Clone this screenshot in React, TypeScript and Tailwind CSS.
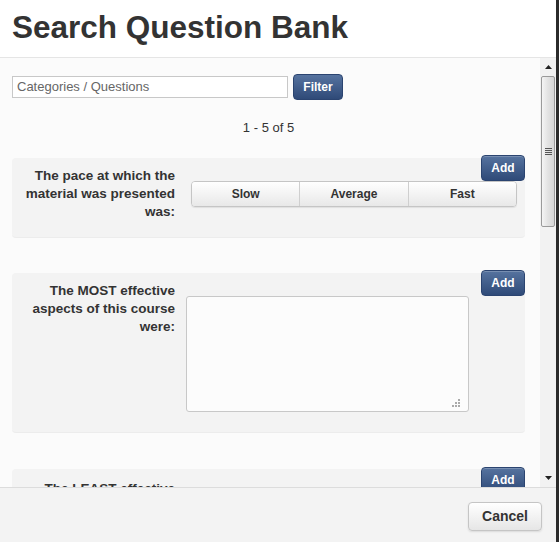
import React from 'react'

const font = { fontFamily: '"Liberation Sans", Arial, sans-serif' }

const AddButton: React.FC = () => (
  <button className="h-[26px] w-[44px] rounded-[4px] border border-[#2b4470] bg-gradient-to-b from-[#56739f] to-[#2f4a78] text-[12px] font-bold text-white shadow-[inset_0_1px_0_rgba(255,255,255,0.2)]">
    Add
  </button>
)

const Scrollbar: React.FC = () => (
  <div className="flex w-[16px] flex-col items-center bg-[#f2f2f2]">
    <div className="flex h-[18px] w-full items-center justify-center">
      <svg width="7" height="4" viewBox="0 0 7 4">
        <path d="M0 4 L3.5 0 L7 4 Z" fill="#222" />
      </svg>
    </div>
    <div className="flex h-[151px] w-[14px] items-center justify-center rounded-[2px] border border-[#9a9a9a] bg-gradient-to-r from-[#f4f4f4] via-[#e2e2e2] to-[#d6d6d6]">
      <div className="flex flex-col gap-[1px]">
        <div className="h-[1px] w-[7px] bg-[#555]" />
        <div className="h-[1px] w-[7px] bg-[#555]" />
        <div className="h-[1px] w-[7px] bg-[#555]" />
        <div className="h-[1px] w-[7px] bg-[#555]" />
      </div>
    </div>
    <div className="flex-1" />
    <div className="flex h-[18px] w-full items-center justify-center">
      <svg width="7" height="4" viewBox="0 0 7 4">
        <path d="M0 0 L3.5 4 L7 0 Z" fill="#222" />
      </svg>
    </div>
  </div>
)

export default function App() {
  const segments = ['Slow', 'Average', 'Fast']

  return (
    <div className="flex h-[542px] w-[559px] bg-[#2b2b2b] text-[#333]" style={font}>
      <div className="flex w-[556px] flex-col bg-white">
        {/* Header */}
        <div className="flex h-[58px] shrink-0 items-center border-b border-[#e5e5e5] px-[12px] pb-[2px]">
          <h1 className="text-[31.5px] font-bold leading-none text-[#333]">Search Question Bank</h1>
        </div>

        {/* Body */}
        <div className="flex min-h-0 flex-1">
          <div className="flex-1 overflow-hidden bg-[#fbfbfb] pl-[12px] pr-[15px] pt-[16px]">
            <div className="flex items-center gap-[5px]">
              <div className="flex h-[22px] w-[276px] items-center border border-[#c8c8c8] bg-white px-[4px] text-[13px] text-[#666]">
                Categories / Questions
              </div>
              <button className="h-[26px] w-[50px] rounded-[4px] border border-[#2b4470] bg-gradient-to-b from-[#56739f] to-[#2f4a78] text-[12px] font-bold text-white">
                Filter
              </button>
            </div>

            <div className="mt-[19px] text-center text-[13px] leading-[18px]">1 - 5 of 5</div>

            {/* Question 1 */}
            <div className="relative mt-[21px] flex h-[80px] rounded-[4px] border-b border-[#ececec] bg-[#f3f3f3]">
              <div className="w-[163px] shrink-0 pl-[4px] pt-[9px] text-right text-[13.5px] font-bold leading-[18px]">
                The pace at which the material was presented was:
              </div>
              <div className="ml-[16px] mt-[23px] flex h-[26px] w-[326px] shrink-0 overflow-hidden rounded-[4px] border border-[#c5c5c5] shadow-[0_1px_1px_rgba(0,0,0,0.08)]">
                {segments.map((s, i) => (
                  <div
                    key={s}
                    className={`flex flex-1 items-center justify-center bg-gradient-to-b from-white to-[#e8e8e8] text-[12px] font-bold ${
                      i > 0 ? 'border-l border-[#cfcfcf]' : ''
                    }`}
                  >
                    {s}
                  </div>
                ))}
              </div>
              <div className="absolute -top-[3px] right-0">
                <AddButton />
              </div>
            </div>

            {/* Question 2 */}
            <div className="relative mt-[35px] flex h-[160px] rounded-[4px] border-b border-[#ececec] bg-[#f3f3f3]">
              <div className="w-[163px] shrink-0 pl-[4px] pt-[9px] text-right text-[13.5px] font-bold leading-[18px]">
                The MOST effective aspects of this course were:
              </div>
              <div className="relative ml-[11px] mt-[23px] h-[116px] w-[283px] shrink-0 rounded-[3px] border border-[#c8c8c8] bg-[#fcfcfc]">
                <svg className="absolute bottom-[3px] right-[7px]" width="9" height="9" viewBox="0 0 9 9">
                  <rect x="6" y="0" width="2" height="2" fill="#aaa" />
                  <rect x="3" y="3" width="2" height="2" fill="#aaa" />
                  <rect x="6" y="3" width="2" height="2" fill="#aaa" />
                  <rect x="0" y="6" width="2" height="2" fill="#aaa" />
                  <rect x="3" y="6" width="2" height="2" fill="#aaa" />
                  <rect x="6" y="6" width="2" height="2" fill="#aaa" />
                </svg>
              </div>
              <div className="absolute -top-[3px] right-0">
                <AddButton />
              </div>
            </div>

            {/* Question 3 */}
            <div className="relative mt-[36px] flex h-[120px] rounded-[4px] bg-[#f3f3f3]">
              <div className="w-[163px] shrink-0 pl-[4px] pt-[11px] text-right text-[13.5px] font-bold leading-[18px]">
                The LEAST effective aspects of this course were:
              </div>
              <div className="absolute -top-[2px] right-0">
                <AddButton />
              </div>
            </div>
          </div>
          <Scrollbar />
        </div>

        {/* Footer */}
        <div className="flex h-[55px] shrink-0 items-start justify-end border-t border-[#dcdcdc] bg-[#f3f3f3] pr-[14px] pt-[14px]">
          <button className="h-[29px] w-[74px] rounded-[4px] border border-[#c5c5c5] bg-gradient-to-b from-white to-[#e6e6e6] text-[14px] font-bold text-[#333] shadow-[0_1px_2px_rgba(0,0,0,0.1)]">
            Cancel
          </button>
        </div>
      </div>
    </div>
  )
}
